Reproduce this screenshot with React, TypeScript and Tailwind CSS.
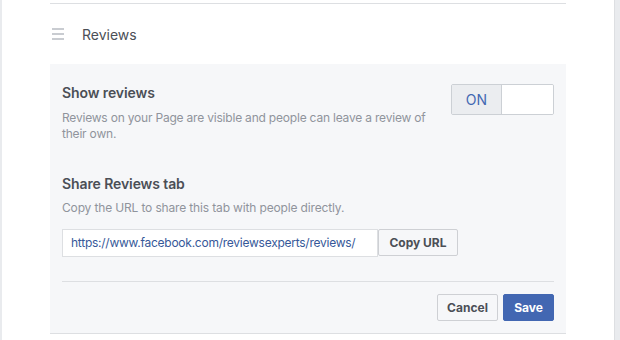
import React from "react";

function Hamburger() {
  return (
    <div className="flex w-[12px] flex-col gap-[3px]">
      <span className="h-[2px] w-full bg-[#c9ccd1]" />
      <span className="h-[2px] w-full bg-[#c9ccd1]" />
      <span className="h-[2px] w-full bg-[#c9ccd1]" />
    </div>
  );
}

export default function App() {
  return (
    <div
      className="flex h-[340px] w-[620px] overflow-hidden bg-white"
      style={{ fontFamily: 'Inter, "Liberation Sans", Arial, sans-serif' }}
    >
      <div className="w-[2px] bg-[#e9ebee]" />
      <div className="flex-1 pl-[48px] pr-[48px]">
        <div className="mt-[3px] h-px bg-[#dddfe2]" />

        {/* section header */}
        <div className="flex h-[60px] items-center">
          <div className="ml-[2px]">
            <Hamburger />
          </div>
          <span className="ml-[18px] text-[14px] text-[#4b4f56]">Reviews</span>
        </div>

        {/* settings panel */}
        <div className="border-b border-[#dddfe2] bg-[#f6f7f9] px-[12px] pt-[20px] pb-[12px]">
          <div className="flex items-start">
            <div className="w-[380px]">
              <div className="text-[14px] font-semibold leading-[18px] tracking-[-0.1px] text-[#4b4f56]">
                Show reviews
              </div>
              <div className="mt-[8px] text-[12px] leading-[16px] tracking-[-0.2px] text-[#90949c]">
                Reviews on your Page are visible and people can leave a review of their own.
              </div>
            </div>
            <div className="ml-auto flex h-[31px] w-[103px] overflow-hidden rounded-[2px] border border-[#ccd0d5]">
              <div className="flex w-[50px] items-center justify-center border-r border-[#ccd0d5] bg-[#ebedf0] text-[14px] text-[#4267b2]">
                ON
              </div>
              <div className="flex-1 bg-white" />
            </div>
          </div>

          <div className="mt-[33px] text-[14px] font-semibold leading-[18px] tracking-[-0.1px] text-[#4b4f56]">
            Share Reviews tab
          </div>
          <div className="mt-[7px] text-[12px] leading-[16px] tracking-[-0.15px] text-[#90949c]">
            Copy the URL to share this tab with people directly.
          </div>

          <div className="mt-[13px] flex items-start">
            <div className="flex h-[28px] w-[316px] items-center border border-[#dddfe2] bg-white pl-[8px] text-[12px] tracking-[-0.25px] text-[#365899]">
              https://www.facebook.com/reviewsexperts/reviews/
            </div>
            <button className="flex h-[27px] w-[80px] items-center justify-center rounded-[2px] border border-[#ced0d4] bg-[#f6f7f9] text-[12px] font-bold text-[#4b4f56]">
              Copy URL
            </button>
          </div>

          <div className="mt-[24px] h-px bg-[#dddfe2]" />

          <div className="mt-[12px] flex justify-end gap-[5px]">
            <button className="flex h-[27px] w-[61px] items-center justify-center rounded-[2px] border border-[#ced0d4] bg-[#f6f7f9] text-[12px] font-bold text-[#4b4f56]">
              Cancel
            </button>
            <button className="flex h-[27px] w-[51px] items-center justify-center rounded-[2px] border border-[#4267b2] bg-[#4267b2] text-[12px] font-bold text-white">
              Save
            </button>
          </div>
        </div>
      </div>
      <div className="w-[6px] border-l border-[#dddfe2] bg-[#e9ebee]" />
    </div>
  );
}
